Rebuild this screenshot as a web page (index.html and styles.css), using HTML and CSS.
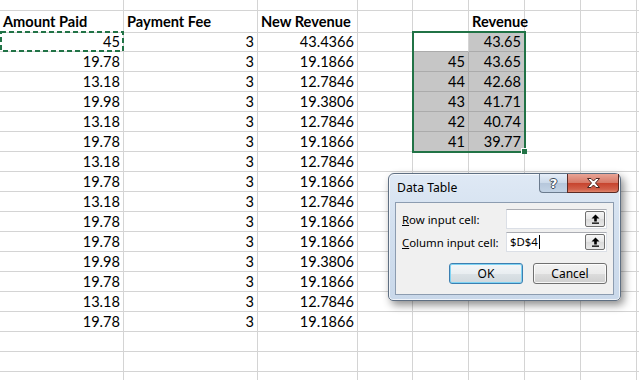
FILE: index.html
```html
<!DOCTYPE html>
<html>
<head>
<meta charset="utf-8">
<link rel="stylesheet" href="styles.css">
</head>
<body>
<div class="sheet">
  <div class="row r0"><div class="c"></div><div class="c"></div><div class="c"></div><div class="c"></div><div class="c"></div><div class="c"></div><div class="c"></div><div class="c"></div><div class="c"></div></div>
  <div class="row hdr"><div class="c h">Amount Paid</div><div class="c h">Payment Fee</div><div class="c h">New Revenue</div><div class="c"></div><div class="c"></div><div class="c h n">Revenue</div><div class="c"></div><div class="c"></div><div class="c"></div></div>
  <div class="row"><div class="c n">45</div><div class="c n">3</div><div class="c n">43.4366</div><div class="c"></div><div class="c sel-top"></div><div class="c n sel">43.65</div><div class="c"></div><div class="c"></div><div class="c"></div></div>
  <div class="row"><div class="c n">19.78</div><div class="c n">3</div><div class="c n">19.1866</div><div class="c"></div><div class="c n sel">45</div><div class="c n sel">43.65</div><div class="c"></div><div class="c"></div><div class="c"></div></div>
  <div class="row"><div class="c n">13.18</div><div class="c n">3</div><div class="c n">12.7846</div><div class="c"></div><div class="c n sel">44</div><div class="c n sel">42.68</div><div class="c"></div><div class="c"></div><div class="c"></div></div>
  <div class="row"><div class="c n">19.98</div><div class="c n">3</div><div class="c n">19.3806</div><div class="c"></div><div class="c n sel">43</div><div class="c n sel">41.71</div><div class="c"></div><div class="c"></div><div class="c"></div></div>
  <div class="row"><div class="c n">13.18</div><div class="c n">3</div><div class="c n">12.7846</div><div class="c"></div><div class="c n sel">42</div><div class="c n sel">40.74</div><div class="c"></div><div class="c"></div><div class="c"></div></div>
  <div class="row"><div class="c n">19.78</div><div class="c n">3</div><div class="c n">19.1866</div><div class="c"></div><div class="c n sel">41</div><div class="c n sel">39.77</div><div class="c"></div><div class="c"></div><div class="c"></div></div>
  <div class="row"><div class="c n">13.18</div><div class="c n">3</div><div class="c n">12.7846</div><div class="c"></div><div class="c"></div><div class="c"></div><div class="c"></div><div class="c"></div><div class="c"></div></div>
  <div class="row"><div class="c n">19.78</div><div class="c n">3</div><div class="c n">19.1866</div><div class="c"></div><div class="c"></div><div class="c"></div><div class="c"></div><div class="c"></div><div class="c"></div></div>
  <div class="row"><div class="c n">13.18</div><div class="c n">3</div><div class="c n">12.7846</div><div class="c"></div><div class="c"></div><div class="c"></div><div class="c"></div><div class="c"></div><div class="c"></div></div>
  <div class="row"><div class="c n">19.78</div><div class="c n">3</div><div class="c n">19.1866</div><div class="c"></div><div class="c"></div><div class="c"></div><div class="c"></div><div class="c"></div><div class="c"></div></div>
  <div class="row"><div class="c n">19.78</div><div class="c n">3</div><div class="c n">19.1866</div><div class="c"></div><div class="c"></div><div class="c"></div><div class="c"></div><div class="c"></div><div class="c"></div></div>
  <div class="row"><div class="c n">19.98</div><div class="c n">3</div><div class="c n">19.3806</div><div class="c"></div><div class="c"></div><div class="c"></div><div class="c"></div><div class="c"></div><div class="c"></div></div>
  <div class="row"><div class="c n">19.78</div><div class="c n">3</div><div class="c n">19.1866</div><div class="c"></div><div class="c"></div><div class="c"></div><div class="c"></div><div class="c"></div><div class="c"></div></div>
  <div class="row"><div class="c n">13.18</div><div class="c n">3</div><div class="c n">12.7846</div><div class="c"></div><div class="c"></div><div class="c"></div><div class="c"></div><div class="c"></div><div class="c"></div></div>
  <div class="row"><div class="c n">19.78</div><div class="c n">3</div><div class="c n">19.1866</div><div class="c"></div><div class="c"></div><div class="c"></div><div class="c"></div><div class="c"></div><div class="c"></div></div>
  <div class="row"><div class="c"></div><div class="c"></div><div class="c"></div><div class="c"></div><div class="c"></div><div class="c"></div><div class="c"></div><div class="c"></div><div class="c"></div></div>
  <div class="row"><div class="c"></div><div class="c"></div><div class="c"></div><div class="c"></div><div class="c"></div><div class="c"></div><div class="c"></div><div class="c"></div><div class="c"></div></div>
  <div class="row"><div class="c"></div><div class="c"></div><div class="c"></div><div class="c"></div><div class="c"></div><div class="c"></div><div class="c"></div><div class="c"></div><div class="c"></div></div>

  <svg class="ants" width="124" height="21" viewBox="0 0 124 21"><rect x="1" y="1" width="122" height="19" fill="none" stroke="#217346" stroke-width="2" stroke-dasharray="5 3"/></svg>
  <div class="selbox"></div>
  <div class="handle"></div>

  <div class="dialog">
    <div class="titlebar">
      <span class="title">Data Table</span>
      <div class="capbtns">
        <div class="cap help">?</div>
        <div class="cap close">
          <svg width="13" height="10" viewBox="0 0 13 10"><path d="M0.5 0.5 H4 L6.5 3 L9 0.5 H12.5 L8.5 5 L12.5 9.5 H9 L6.5 7 L4 9.5 H0.5 L4.5 5 Z" fill="#fff" stroke="#4a2622" stroke-width="1" stroke-linejoin="round"/></svg>
        </div>
      </div>
    </div>
    <div class="client">
      <div class="field">
        <span class="label"><u>R</u>ow input cell:</span>
        <div class="input"><span class="val"></span><span class="pick"><svg width="9" height="10" viewBox="0 0 9 10"><path d="M4.5 0.5 L8.5 4.5 H5.8 V7.5 H3.2 V4.5 H0.5 Z" fill="#000"/><rect x="1" y="8.5" width="7" height="1.3" fill="#000"/></svg></span></div>
      </div>
      <div class="field">
        <span class="label"><u>C</u>olumn input cell:</span>
        <div class="input"><span class="val">$D$4<i class="caret"></i></span><span class="pick"><svg width="9" height="10" viewBox="0 0 9 10"><path d="M4.5 0.5 L8.5 4.5 H5.8 V7.5 H3.2 V4.5 H0.5 Z" fill="#000"/><rect x="1" y="8.5" width="7" height="1.3" fill="#000"/></svg></span></div>
      </div>
      <div class="actions">
        <div class="btn default">OK</div>
        <div class="btn">Cancel</div>
      </div>
    </div>
  </div>
</div>
</body>
</html>
```

FILE: styles.css
```css
html, body {
  margin: 0;
  padding: 0;
  background: #fff;
  overflow: hidden;
}
.sheet {
  position: relative;
  width: 639px;
  height: 380px;
  overflow: hidden;
  font-family: Lato, "Liberation Sans", sans-serif;
  font-size: 14.6px;
  color: #000;
}
.row {
  display: grid;
  grid-template-columns: 124px 134px 100px 55px 56px 56px 56px 56px 1fr;
  height: 20px;
}
.row.r0 { height: 11px; }
.row.hdr { height: 21px; }
.c {
  box-sizing: border-box;
  border-right: 1px solid #d4d4d4;
  border-bottom: 1px solid #d4d4d4;
  padding: 0 3px;
  line-height: 19px;
  white-space: nowrap;
  overflow: visible;
}
.hdr .c { line-height: 21px; }
.c.h { font-weight: bold; }
.c.n { text-align: right; }
.c.sel {
  background: #c6c6c6;
  border-color: #ababab;
}
.c.sel-top {
  border-bottom-color: #ababab;
}
.ants {
  position: absolute;
  left: 0;
  top: 31px;
}
.selbox {
  position: absolute;
  left: 412px;
  top: 31px;
  width: 114px;
  height: 122px;
  box-sizing: border-box;
  border: 2px solid #217346;
}
.handle {
  position: absolute;
  left: 521px;
  top: 148px;
  width: 5px;
  height: 5px;
  background: #217346;
  border: 1px solid #fff;
  border-right: none;
  border-bottom: none;
}

/* dialog */
.dialog {
  position: absolute;
  left: 388px;
  top: 173px;
  width: 233px;
  height: 128px;
  box-sizing: border-box;
  border: 1px solid #5f6f82;
  border-radius: 6px 6px 5px 5px;
  background: linear-gradient(#dfe9f5, #d3e0ef 40%, #c9d8ea);
  box-shadow: inset 0 0 0 1px rgba(255,255,255,0.7), 3px 4px 8px rgba(0,0,0,0.45);
  font-family: "Noto Sans", "Open Sans", sans-serif;
  font-size: 11.4px;
  color: #000;
  display: flex;
  flex-direction: column;
}
.titlebar {
  height: 28px;
  display: flex;
  justify-content: space-between;
  align-items: flex-start;
}
.title {
  padding: 5px 0 0 8px;
  font-size: 12.2px;
  line-height: 17px;
}
.capbtns {
  display: flex;
  margin-right: 1px;
}
.cap {
  height: 19px;
  box-sizing: border-box;
  border: 1px solid #6b7b8e;
  border-top: none;
  display: flex;
  align-items: center;
  justify-content: center;
}
.cap.help {
  width: 28px;
  border-right: none;
  border-radius: 0 0 0 4px;
  background: linear-gradient(#e6eef8, #cbd9e9 50%, #b6c7db 51%, #c3d3e5);
  color: #fff;
  font-weight: bold;
  font-size: 13px;
  font-family: "DejaVu Sans", sans-serif;
  text-shadow: 1px 0 0 #3d4a5a, -1px 0 0 #3d4a5a, 0 1px 0 #3d4a5a, 0 -1px 0 #3d4a5a;
}
.cap.close {
  width: 52px;
  border-color: #5a2a24;
  border-radius: 0 0 4px 0;
  background: linear-gradient(#e8a496, #d77a68 48%, #c7442e 52%, #d1604a 85%, #e08870);
}
.client {
  flex: 1;
  margin: 0 6px 5px 6px;
  background: #f0f0f0;
  border: 1px solid #8c9cb0;
  padding: 6px 6px 0 6px;
  display: flex;
  flex-direction: column;
}
.field {
  display: flex;
  align-items: center;
  justify-content: space-between;
  height: 20px;
  margin-bottom: 3px;
}
.label {
  white-space: nowrap;
}
.input {
  width: 101px;
  height: 20px;
  box-sizing: border-box;
  background: #fff;
  border: 1px solid #dbdfe6;
  border-top-color: #abadb3;
  display: flex;
  align-items: center;
  justify-content: space-between;
  padding: 0 1px 0 3px;
}
.val {
  display: flex;
  align-items: center;
  line-height: 16px;
}
.caret {
  display: inline-block;
  width: 1px;
  height: 14px;
  background: #000;
  margin-left: 1px;
}
.pick {
  width: 20px;
  height: 16px;
  box-sizing: border-box;
  border: 1px solid #707070;
  border-radius: 2px;
  background: linear-gradient(#f6f6f6, #e6e6e6 50%, #dadada 51%, #e8e8e8);
  display: flex;
  align-items: center;
  justify-content: center;
}
.actions {
  display: flex;
  justify-content: flex-end;
  gap: 10px;
  margin-top: 8px;
}
.btn {
  width: 74px;
  height: 21px;
  box-sizing: border-box;
  border: 1px solid #707070;
  border-radius: 3px;
  background: linear-gradient(#f2f2f2, #ebebeb 50%, #dddddd 51%, #cfcfcf);
  box-shadow: inset 0 0 0 1px rgba(255,255,255,0.8);
  display: flex;
  align-items: center;
  justify-content: center;
  font-size: 12px;
}
.btn.default {
  border-color: #3c7fb1;
  box-shadow: inset 0 0 0 1px #7fd3f3;
  background: linear-gradient(#f3f6f8, #e9eef1 50%, #dbe2e6 51%, #d0d8dd);
}
```
